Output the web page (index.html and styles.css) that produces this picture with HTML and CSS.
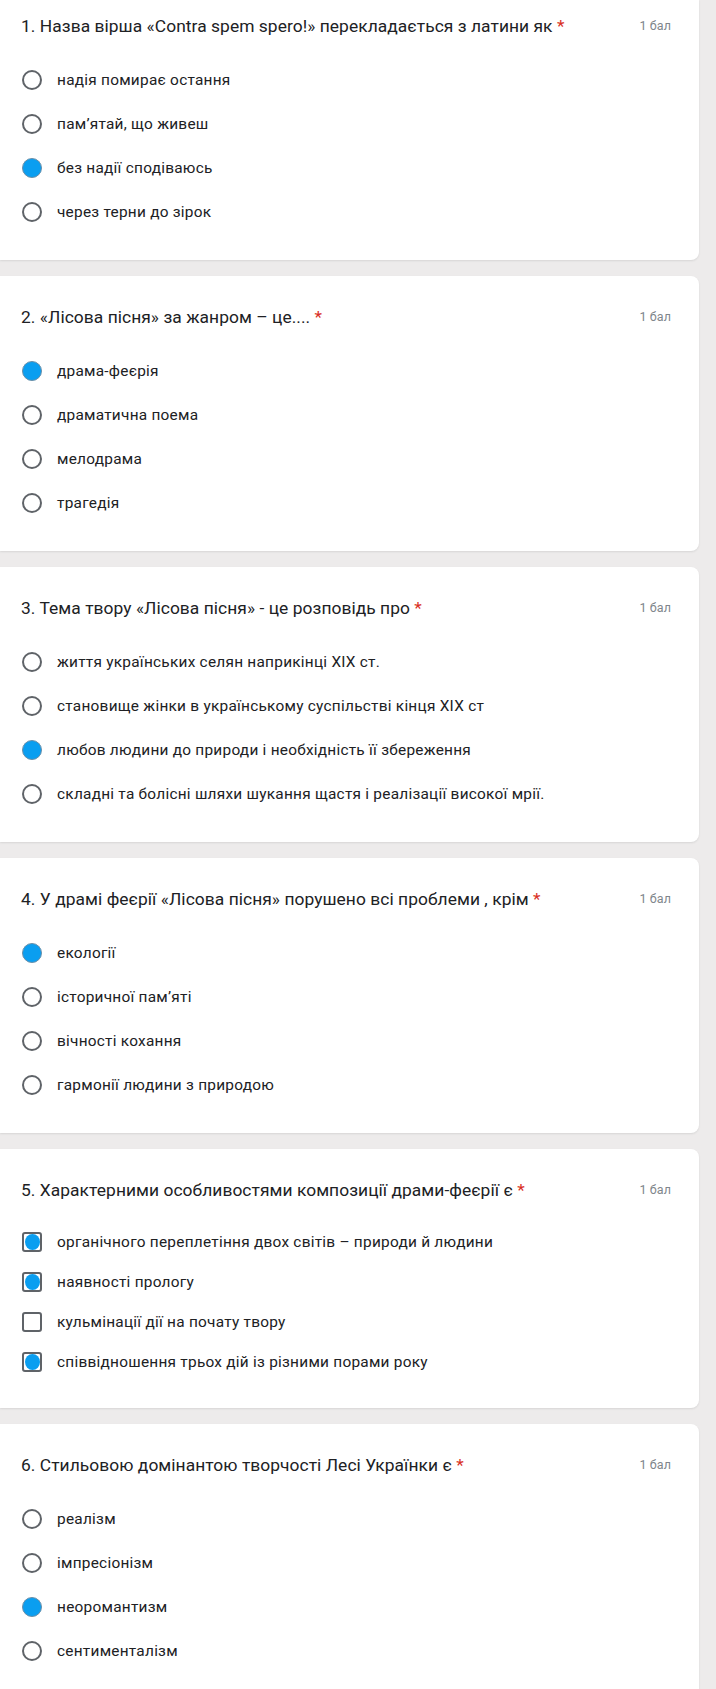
FILE: index.html
```html
<!DOCTYPE html>
<html lang="uk">
<head>
<meta charset="utf-8">
<title>Тест</title>
<link rel="stylesheet" href="styles.css">
</head>
<body>
<main class="form">
  <section class="card card-first">
    <div class="q-head">
      <div class="q-title">1. Назва вірша «Contra spem spero!» перекладається з латини як <span class="req">*</span></div>
      <div class="q-points">1 бал</div>
    </div>
    <div class="options">
      <div class="opt"><span class="radio"></span><span class="opt-text">надія помирає остання</span></div>
      <div class="opt"><span class="radio"></span><span class="opt-text">пам’ятай, що живеш</span></div>
      <div class="opt"><span class="radio checked"></span><span class="opt-text">без надії сподіваюсь</span></div>
      <div class="opt"><span class="radio"></span><span class="opt-text">через терни до зірок</span></div>
    </div>
  </section>

  <section class="card">
    <div class="q-head">
      <div class="q-title">2. «Лісова пісня» за жанром – це.... <span class="req">*</span></div>
      <div class="q-points">1 бал</div>
    </div>
    <div class="options">
      <div class="opt"><span class="radio checked"></span><span class="opt-text">драма-феєрія</span></div>
      <div class="opt"><span class="radio"></span><span class="opt-text">драматична поема</span></div>
      <div class="opt"><span class="radio"></span><span class="opt-text">мелодрама</span></div>
      <div class="opt"><span class="radio"></span><span class="opt-text">трагедія</span></div>
    </div>
  </section>

  <section class="card">
    <div class="q-head">
      <div class="q-title">3. Тема твору «Лісова пісня» - це розповідь про <span class="req">*</span></div>
      <div class="q-points">1 бал</div>
    </div>
    <div class="options">
      <div class="opt"><span class="radio"></span><span class="opt-text">життя українських селян наприкінці XIX ст.</span></div>
      <div class="opt"><span class="radio"></span><span class="opt-text">становище жінки в українському суспільстві кінця XIX ст</span></div>
      <div class="opt"><span class="radio checked"></span><span class="opt-text">любов людини до природи і необхідність її збереження</span></div>
      <div class="opt"><span class="radio"></span><span class="opt-text">складні та болісні шляхи шукання щастя і реалізації високої мрії.</span></div>
    </div>
  </section>

  <section class="card">
    <div class="q-head">
      <div class="q-title">4. У драмі феєрії «Лісова пісня» порушено всі проблеми , крім <span class="req">*</span></div>
      <div class="q-points">1 бал</div>
    </div>
    <div class="options">
      <div class="opt"><span class="radio checked"></span><span class="opt-text">екології</span></div>
      <div class="opt"><span class="radio"></span><span class="opt-text">історичної пам’яті</span></div>
      <div class="opt"><span class="radio"></span><span class="opt-text">вічності кохання</span></div>
      <div class="opt"><span class="radio"></span><span class="opt-text">гармонії людини з природою</span></div>
    </div>
  </section>

  <section class="card">
    <div class="q-head">
      <div class="q-title">5. Характерними особливостями композиції драми-феєрії є <span class="req">*</span></div>
      <div class="q-points">1 бал</div>
    </div>
    <div class="options options-check">
      <div class="opt opt-check"><span class="checkbox checked"></span><span class="opt-text">органічного переплетіння двох світів – природи й людини</span></div>
      <div class="opt opt-check"><span class="checkbox checked"></span><span class="opt-text">наявності прологу</span></div>
      <div class="opt opt-check"><span class="checkbox"></span><span class="opt-text">кульмінації дії на почату твору</span></div>
      <div class="opt opt-check"><span class="checkbox checked"></span><span class="opt-text">співвідношення трьох дій із різними порами року</span></div>
    </div>
  </section>

  <section class="card">
    <div class="q-head">
      <div class="q-title">6. Стильовою домінантою творчості Лесі Українки є <span class="req">*</span></div>
      <div class="q-points">1 бал</div>
    </div>
    <div class="options">
      <div class="opt"><span class="radio"></span><span class="opt-text">реалізм</span></div>
      <div class="opt"><span class="radio"></span><span class="opt-text">імпресіонізм</span></div>
      <div class="opt"><span class="radio checked"></span><span class="opt-text">неоромантизм</span></div>
      <div class="opt"><span class="radio"></span><span class="opt-text">сентименталізм</span></div>
    </div>
  </section>
</main>
</body>
</html>
```

FILE: styles.css
```css
html, body {
  margin: 0;
  padding: 0;
  background: #edebeb;
}

body {
  font-family: Roboto, "Noto Sans", Arial, sans-serif;
  color: #202124;
  overflow: hidden;
}

.form {
  display: flex;
  flex-direction: column;
  gap: 16px;
  width: 699px;
}

.card {
  background: #ffffff;
  border-radius: 0 8px 8px 0;
  box-shadow: 0 1px 2px rgba(60, 64, 67, 0.12);
  padding: 29px 28px 26px 21px;
}

.card-first {
  padding-top: 14px;
  border-top-right-radius: 0;
}

.q-head {
  display: flex;
  justify-content: space-between;
  align-items: center;
  gap: 16px;
}

.q-title {
  font-size: 17.4px;
  line-height: 24px;
  letter-spacing: 0.05px;
  color: #202124;
}

.req {
  color: #d93025;
}

.q-points {
  font-size: 12.5px;
  line-height: 16px;
  color: #80868b;
  letter-spacing: 0.1px;
  white-space: nowrap;
}

.options {
  display: flex;
  flex-direction: column;
  margin-top: 20px;
}

.opt {
  display: flex;
  align-items: center;
  height: 44px;
  gap: 15px;
  padding-left: 1px;
}

.opt-check {
  height: 40px;
}

.opt-text {
  font-size: 15.4px;
  line-height: 20px;
  letter-spacing: 0.25px;
  color: #202124;
}

.radio {
  box-sizing: border-box;
  width: 20px;
  height: 20px;
  border-radius: 50%;
  border: 2px solid #5f6368;
  flex: none;
}

.radio.checked {
  background: #0a9ef0;
  border: 1px solid #6b8fa8;
}

.checkbox {
  box-sizing: border-box;
  width: 20px;
  height: 20px;
  border-radius: 3px;
  border: 2px solid #5f6368;
  flex: none;
  display: flex;
  align-items: center;
  justify-content: center;
}

.checkbox.checked::after {
  content: "";
  width: 15px;
  height: 16px;
  border-radius: 50%;
  background: #0a9ef0;
}
```
